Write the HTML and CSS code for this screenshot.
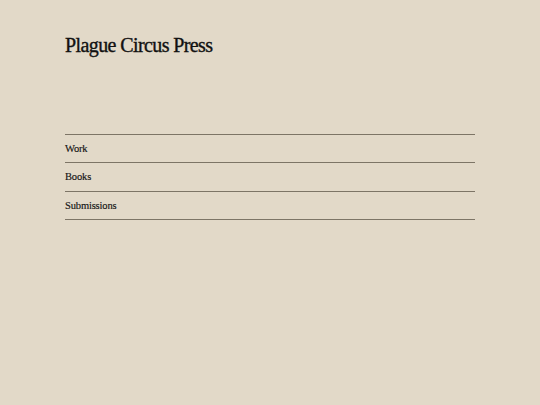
FILE: index.html
```html
<!DOCTYPE html>
<html>
<head>
<meta charset="utf-8">
<link rel="stylesheet" href="styles.css">
</head>
<body>
<div class="page">
  <h1 class="title">Plague Circus Press</h1>
  <nav class="menu">
    <a class="item" href="#">Work</a>
    <a class="item" href="#">Books</a>
    <a class="item" href="#">Submissions</a>
  </nav>
</div>
</body>
</html>
```
FILE: styles.css
```css
html, body {
  margin: 0;
  padding: 0;
  background: #e2d9c8;
}
body {
  width: 540px;
  height: 405px;
  font-family: "Liberation Serif", "DejaVu Serif", serif;
  color: #141414;
}
.page {
  padding: 33px 65px 0 65px;
}
.title {
  margin: 0;
  font-size: 20px;
  font-weight: normal;
  letter-spacing: -0.6px;
  line-height: 24px;
  color: #111;
  -webkit-text-stroke: 0.35px #111;
}
.menu {
  margin-top: 77px;
  display: flex;
  flex-direction: column;
  border-top: 1px solid #7d7566;
}
.item {
  display: block;
  height: 27.33px;
  line-height: 27px;
  border-bottom: 1px solid #7d7566;
  font-size: 10.5px;
  letter-spacing: -0.15px;
  color: #141414;
  text-decoration: none;
  -webkit-text-stroke: 0.15px #141414;
}
```
